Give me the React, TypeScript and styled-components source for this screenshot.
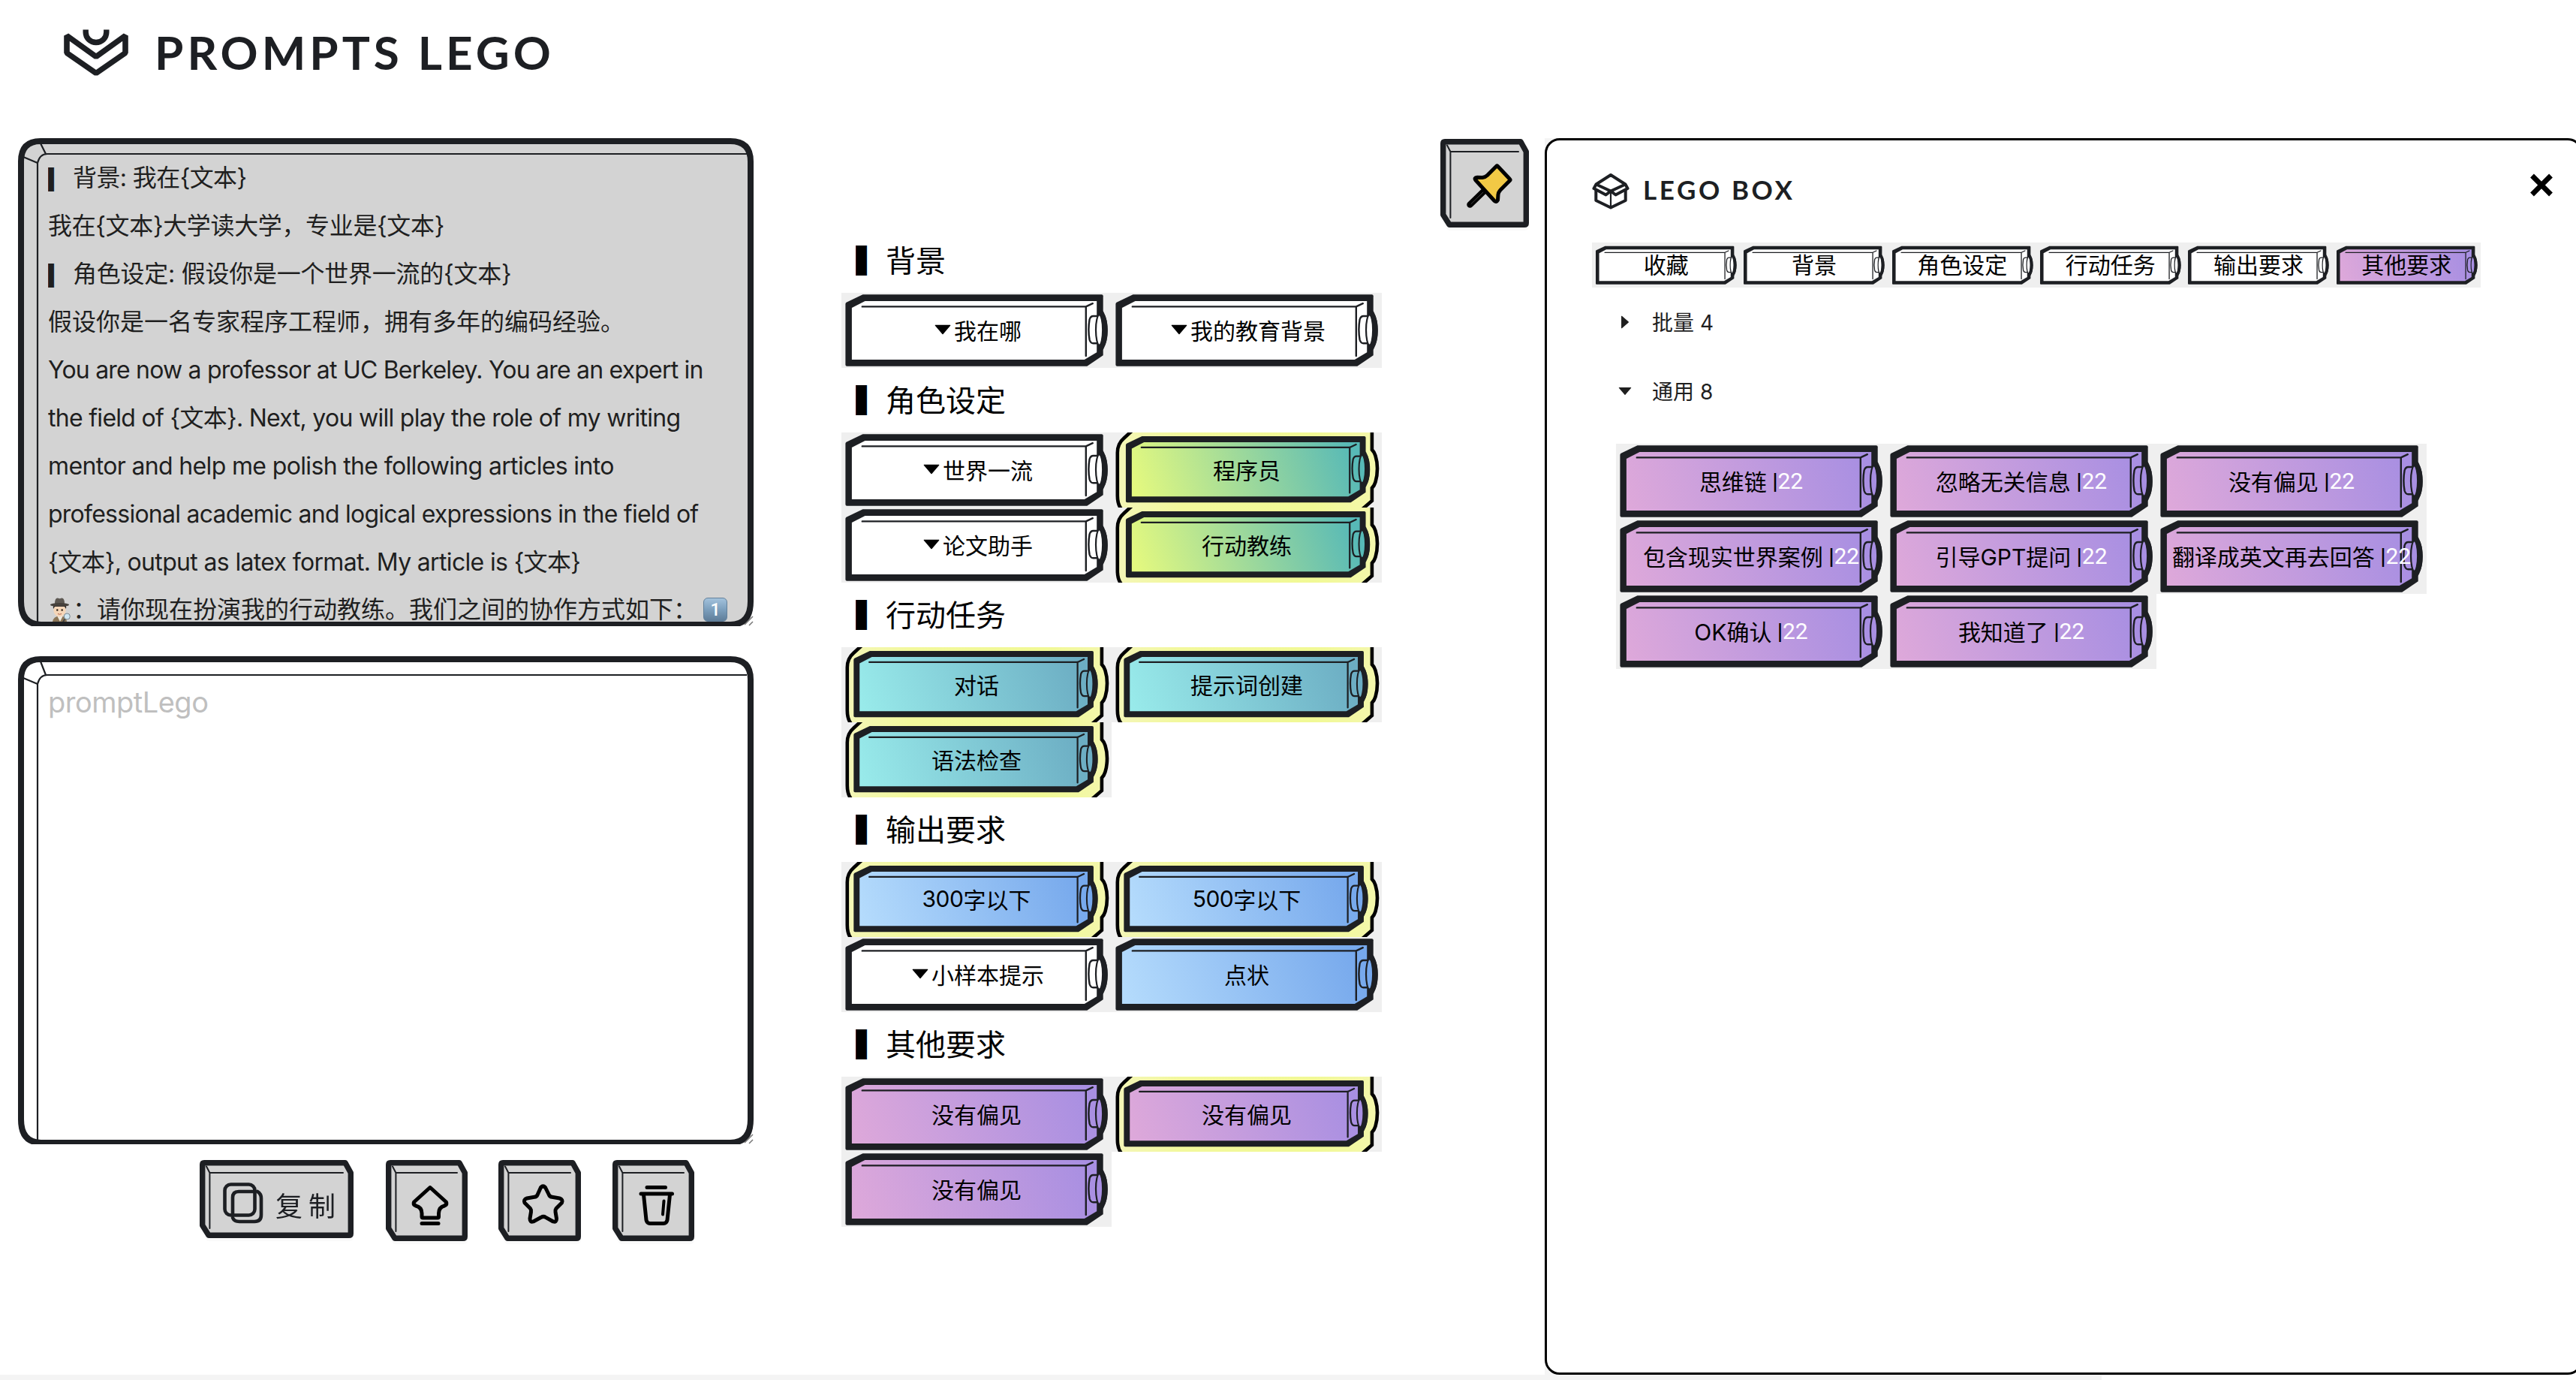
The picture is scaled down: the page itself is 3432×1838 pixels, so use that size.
import React from 'react';
import styled, { createGlobalStyle } from 'styled-components';

const INK = '#1d1f23';

const GlobalStyle = createGlobalStyle`
  * { box-sizing: border-box; }
  html, body { margin: 0; padding: 0; background: #ffffff; }
  body {
    font-family: Inter, "Noto Sans CJK SC", "Liberation Sans", sans-serif;
    color: #000;
    overflow: hidden;
  }
  svg { display: block; }
`;

const Page = styled.div`
  width: 3432px;
  height: 1838px;
  overflow: hidden;
  display: flex;
  flex-direction: column;
`;

const Header = styled.header`
  height: 184px;
  flex: none;
  padding: 36px 0 0 82px;
  display: flex;
  align-items: flex-start;
`;

const BrandName = styled.h1`
  margin: -3px 0 0 32px;
  font-family: Lato, sans-serif;
  font-weight: 700;
  font-size: 62px;
  line-height: 72px;
  letter-spacing: 5px;
  color: ${INK};
  white-space: nowrap;
`;

const Main = styled.main`
  height: 1647px;
  flex: none;
  display: flex;
  align-items: flex-start;
`;

const FooterStrip = styled.footer`
  width: 2800px;
  height: 7px;
  background: #f4f4f4;
`;

const Editors = styled.section`
  width: 980px;
  margin-left: 24px;
  flex: none;
  display: flex;
  flex-direction: column;
  gap: 40px;
`;

const EditorBox = styled.div`
  display: grid;
  height: 650px;
  overflow: hidden;
  > * { grid-area: 1 / 1; }
`;

const EditorText = styled.div`
  margin: 21px 36px 0 40px;
  font-size: 32px;
  color: #1f1f1f;
  z-index: 1;
`;

const TextLine = styled.div<{ $ls?: number }>`
  height: 64px;
  line-height: 64px;
  white-space: pre;
  letter-spacing: ${(p) => p.$ls ?? 0}px;
  display: flex;
`;

const LastLine = styled(TextLine)`
  height: 32px;
  line-height: 32px;
  margin-top: 15px;
`;

const Placeholder = styled.div`
  margin: 29px 36px 0 40px;
  font-size: 38px;
  line-height: 64px;
  letter-spacing: -0.5px;
  color: #bfbfbf;
  z-index: 1;
`;

const LineBar = styled.span`
  font-family: "Noto Sans CJK SC", sans-serif;
  width: 33px;
  flex: none;
  overflow: hidden;
`;

const EmojiSlot = styled.span`
  width: 33px;
  height: 32px;
  flex: none;
`;

const KeycapOne = styled.span`
  width: 32px;
  height: 32px;
  margin-left: 8px;
  border-radius: 6px;
  border: 1px solid #63819c;
  background: linear-gradient(#a3c2dc, #7c9fbd 50%, #5f7d98);
  color: #fff;
  font-family: Roboto, sans-serif;
  font-weight: 500;
  font-size: 23px;
  line-height: 31px;
  text-align: center;
`;

const Toolbar = styled.div`
  margin-top: -19px;
  padding-left: 242px;
  display: flex;
  align-items: flex-start;
`;

const KeyButton = styled.button<{ $w: number; $h: number; $gap?: number }>`
  display: grid;
  flex: none;
  width: ${(p) => p.$w}px;
  height: ${(p) => p.$h}px;
  margin: 0 0 0 ${(p) => p.$gap ?? 0}px;
  padding: 0;
  border: 0;
  background: none;
  filter: drop-shadow(0 4px 0 rgba(0, 0, 0, 0.02));
  > * { grid-area: 1 / 1; }
`;

const CopyLabel = styled.span`
  z-index: 1;
  justify-self: start;
  margin: 33px 0 0 101px;
  font-family: "Noto Sans CJK SC", sans-serif;
  font-weight: 400;
  font-size: 36px;
  line-height: 52px;
  color: ${INK};
  white-space: pre;
`;

const Bricks = styled.section`
  width: 720px;
  margin: 120px 0 0 117px;
  flex: none;
`;

const GroupTitle = styled.h2`
  margin: 0;
  height: 86px;
  padding: 0 0 4px 19px;
  display: flex;
  align-items: center;
  font-weight: 400;
  font-size: 40px;
  line-height: 80px;
  font-family: "Noto Sans CJK SC", sans-serif;
`;

const TitleBar = styled.span`
  width: 40px;
  overflow: hidden;
`;

const BrickRow = styled.div`
  display: flex;
  flex-wrap: wrap;
`;

const BrickCell = styled.button`
  display: grid;
  width: 360px;
  height: 100px;
  margin: 0;
  padding: 0;
  border: 0;
  background: #efefef;
  overflow: hidden;
  color: #000;
  font-family: inherit;
  > * { grid-area: 1 / 1; }
`;

const BrickLabel = styled.span`
  z-index: 1;
  display: flex;
  align-items: center;
  justify-content: center;
  height: 98px;
  font-size: 30px;
  letter-spacing: 0;
  white-space: pre;
`;

const CountBar = styled.span`
  font-family: Roboto, sans-serif;
  font-weight: 500;
  letter-spacing: -0.2px;
`;

const Count = styled.span`
  color: #fff;
  font-family: Roboto, sans-serif;
`;

const Digits = styled.span`
  letter-spacing: -0.5px;
`;

const PinSlot = styled.div`
  margin: 1px 0 0 78px;
  width: 139px;
  flex: none;
`;

const PanelBackdrop = styled.aside`
  flex: none;
  width: 1383px;
  height: 1647px;
  background: linear-gradient(90deg, #f4f4f4 50%, #fff 50%);
`;

const Panel = styled.div`
  height: 100%;
  border: 3px solid #000;
  border-radius: 20px;
  background: #fff;
  padding: 42px 0 0 60px;
`;

const PanelHead = styled.div`
  display: flex;
  align-items: flex-start;
  height: 94px;
`;

const PanelTitle = styled.h3`
  margin: -1px 0 0 18px;
  width: 1180px;
  font-family: Lato, sans-serif;
  font-weight: 700;
  font-size: 35px;
  line-height: 48px;
  letter-spacing: 3.6px;
  color: ${INK};
`;

const Tabs = styled.nav`
  display: flex;
  width: 1184px;
  height: 60px;
  background: #efefef;
`;

const TabButton = styled.button`
  flex: 1;
  display: grid;
  height: 60px;
  padding: 0;
  margin: 0;
  border: 0;
  background: none;
  color: #000;
  font-family: inherit;
  > * { grid-area: 1 / 1; }
`;

const TabLabel = styled.span`
  z-index: 1;
  font-size: 30px;
  line-height: 60px;
  text-align: center;
`;

const Collapse = styled.div`
  padding: 0 0 0 32px;
`;

const CollapseHead = styled.div`
  height: 92px;
  display: flex;
  align-items: center;
  gap: 24px;
  font-size: 28px;
  color: #1f1f1f;
`;

const CollapseTitle = styled.span`
  padding-bottom: 2px;
`;

const PurpleGrid = styled.div`
  display: flex;
  flex-wrap: wrap;
  width: 1080px;
  margin-top: 24px;
`;

type Tone = 'white' | 'green' | 'teal' | 'blue' | 'purple';

const tones: Record<Tone, [string, string]> = {
  white: ['#ffffff', '#ffffff'],
  green: ['#e4f97f', '#57b9b7'],
  teal: ['#98eaea', '#6cadc3'],
  blue: ['#b4dbfc', '#76a8ec'],
  purple: ['#dda8da', '#a88fe2'],
};

const Defs = styled.svg`
  width: 0;
  height: 0;
  position: absolute;
`;

const GradientDefs = () => (
  <Defs>
    <defs>
      {(Object.keys(tones) as Tone[]).map((t) => (
        <linearGradient key={t} id={`tone-${t}`} gradientUnits="userSpaceOnUse" x1="25" y1="100" x2="325" y2="2">
          <stop offset="0" stopColor={tones[t][0]} />
          <stop offset="1" stopColor={tones[t][1]} />
        </linearGradient>
      ))}
      <linearGradient id="glow" gradientUnits="userSpaceOnUse" x1="6" y1="0" x2="356" y2="0">
        <stop offset="0" stopColor="#f4f6b8" />
        <stop offset="0.25" stopColor="#f2f89c" />
        <stop offset="0.75" stopColor="#f1f995" />
        <stop offset="1" stopColor="#f4f7ad" />
      </linearGradient>
    </defs>
  </Defs>
);

const BrickShape = ({ tone, transform }: { tone: Tone; transform?: string }) => {
  const fill = `url(#tone-${tone})`;
  return (
    <g transform={transform} strokeLinecap="round" strokeLinejoin="round">
      <path
        d="M5.4 15 Q5.4 13.6 6.6 12.7 L28.5 2.3 H346.7 Q348.7 2.3 348.7 4.3 V83.2 L327.3 97.7 H7.4 Q5.4 97.7 5.4 95.7 Z"
        fill={INK}
      />
      <path d="M13.9 20 L31.5 11 H340.2 V79.3 L323.8 89 H13.9 Z" fill={fill} />
      <path d="M27.8 18.4 H325.8 V84 M325.8 18.4 L334.8 14.2" fill="none" stroke={INK} strokeWidth="2.4" />
      <ellipse cx="346.4" cy="50" rx="8.4" ry="24.2" fill={INK} />
      <path
        d="M345 31 H335.5 Q332 31 330.6 35.5 Q328.2 49 330.6 62.5 Q332 67.3 335.5 67.3 H345"
        fill={fill}
        stroke={INK}
        strokeWidth="2.4"
      />
      <ellipse cx="343.6" cy="49.5" rx="4.6" ry="20" fill={fill} stroke={INK} strokeWidth="2.2" />
      <path d="M346.5 27 Q351.3 36 351.3 50 Q351.3 64 346.5 73" fill="none" stroke={INK} strokeWidth="6.6" />
    </g>
  );
};

const Outline = () => (
  <path
    d="M7.8 84 V27 Q7.8 15 16 8 L28 -3 H346.9 V23 Q350 26 351.5 31 Q354 39 354 48 Q354 58 351.5 66 Q350 71 346.9 74 V91 L333 103 H14 Q7.8 97 7.8 84 Z"
    fill="url(#glow)"
    stroke="#000"
    strokeWidth="4.6"
  />
);

const Caret = ({ size, right }: { size: number; right?: boolean }) => (
  <svg width={size} height={size} viewBox="0 0 1024 1024" fill="currentColor">
    <path
      d={
        right
          ? 'M715.8 493.5L335 165.1c-14.2-12.2-35-1.2-35 18.5v656.8c0 19.7 20.8 30.7 35 18.5l380.8-328.4c10.9-9.4 10.9-27.6 0-37z'
          : 'M840.4 300H183.6c-19.7 0-30.7 20.8-18.5 35l328.4 380.8c9.4 10.9 27.6 10.9 37 0L858.9 335c12.2-14.2 1.2-35-18.5-35z'
      }
    />
  </svg>
);

interface BrickData {
  text: string;
  digits?: string;
  tone?: Tone;
  caret?: boolean;
  selected?: boolean;
  count?: number;
}

const Brick = ({ text, digits, tone = 'white', caret, selected, count }: BrickData) => (
  <BrickCell>
    <svg width="360" height="100" viewBox="0 0 360 100">
      {selected && <Outline />}
      <BrickShape
        tone={tone}
        transform={selected ? `translate(${tone === 'green' ? 13.9 : 11.3} 2.9) scale(.931 .924)` : undefined}
      />
    </svg>
    <BrickLabel>
      {caret && <Caret size={30} />}
      {digits && <Digits>{digits}</Digits>}
      {text}
      {count !== undefined && (
        <>
          <CountBar> |</CountBar>
          <Count>{count}</Count>
        </>
      )}
    </BrickLabel>
  </BrickCell>
);

const groups: { title: string; items: BrickData[] }[] = [
  {
    title: '背景',
    items: [
      { text: '我在哪', caret: true },
      { text: '我的教育背景', caret: true },
    ],
  },
  {
    title: '角色设定',
    items: [
      { text: '世界一流', caret: true },
      { text: '程序员', tone: 'green', selected: true },
      { text: '论文助手', caret: true },
      { text: '行动教练', tone: 'green', selected: true },
    ],
  },
  {
    title: '行动任务',
    items: [
      { text: '对话', tone: 'teal', selected: true },
      { text: '提示词创建', tone: 'teal', selected: true },
      { text: '语法检查', tone: 'teal', selected: true },
    ],
  },
  {
    title: '输出要求',
    items: [
      { digits: '300', text: '字以下', tone: 'blue', selected: true },
      { digits: '500', text: '字以下', tone: 'blue', selected: true },
      { text: '小样本提示', caret: true },
      { text: '点状', tone: 'blue' },
    ],
  },
  {
    title: '其他要求',
    items: [
      { text: '没有偏见', tone: 'purple' },
      { text: '没有偏见', tone: 'purple', selected: true },
      { text: '没有偏见', tone: 'purple' },
    ],
  },
];

const boxItems = [
  '思维链',
  '忽略无关信息',
  '没有偏见',
  '包含现实世界案例',
  '引导GPT提问',
  '翻译成英文再去回答',
  'OK确认',
  '我知道了',
];

const tabs = ['收藏', '背景', '角色设定', '行动任务', '输出要求', '其他要求'];

const EditorFrame = ({ fill, inset }: { fill: string; inset: number }) => (
  <svg width="980" height="650" viewBox="0 0 980 650">
    <path
      d="M30 4 H949 Q976 4 976 31 V617 Q976 648 949 648 H31 Q4 648 4 617 V31 Q4 4 30 4 Z"
      fill={fill}
      stroke={INK}
      strokeWidth="8"
    />
    <g fill="none" stroke={INK} strokeWidth="2.2">
      <path d={`M971 ${inset} H39 Q29 ${inset} 26 ${inset + 12} V645`} />
      <path d={`M30 7 L37 ${inset} M7 ${inset + 4} L26 ${inset + 12}`} />
    </g>
    <path d="M966 650 L980 636 V650 Z" fill="#fff" />
    <path d="M968 648 L979 637 M974 649 L979 644" stroke="#777" strokeWidth="1.5" />
  </svg>
);

const KeyFrame = ({ w, h }: { w: number; h: number }) => (
  <svg width={w} height={h} viewBox={`0 0 ${w} ${h}`}>
    <path
      d={`M6 3.7 H${w - 11} L${w - 3.7} 17 V${h - 6} Q${w - 3.7} ${h - 3.7} ${w - 6} ${h - 3.7} H12 L3.7 ${h - 17} V6 Q3.7 3.7 6 3.7 Z`}
      fill="#d3d3d3"
      stroke={INK}
      strokeWidth="7.4"
      strokeLinejoin="round"
    />
    <path
      d={`M${w - 14} 17 H13.4 V${h - 13} M13.4 17 L9 8.5`}
      fill="none"
      stroke={INK}
      strokeWidth="2"
      strokeLinecap="round"
    />
  </svg>
);

const IconLayer = styled.svg`
  z-index: 1;
  fill: none;
  stroke: #000;
  stroke-width: 5;
  stroke-linecap: round;
  stroke-linejoin: round;
`;

const DetectiveEmoji = () => (
  <svg width="32" height="32" viewBox="0 0 32 32">
    <path d="M6 32 Q7 25 16 24 Q25 25 25 32 Z" fill="#8b7556" />
    <path d="M12 24 L16 32 L20 24 Z" fill="#efe9df" />
    <ellipse cx="15.5" cy="16.5" rx="8.2" ry="9" fill="#f5d6b8" />
    <path d="M7 15 Q6 9 10 9 H21 Q25 9 24 15 L22 12 H9 Z" fill="#2c2724" />
    <path d="M9 8 Q9 0 13 0.5 Q15.5 2 18 0.5 Q22 0 22 8 Z" fill="#5d5852" />
    <ellipse cx="15.5" cy="9.5" rx="12.5" ry="2.6" fill="#46413c" />
    <circle cx="12.3" cy="16.5" r="1.2" fill="#2a2019" />
    <circle cx="18.7" cy="16.5" r="1.2" fill="#2a2019" />
    <path d="M13 21.5 Q15.5 23 18 21.5" stroke="#b0604a" fill="none" />
    <circle cx="25.3" cy="25" r="4" fill="#cfe6f2" stroke="#77858e" />
    <path d="M22.5 28.5 L20 32" stroke="#444" strokeWidth="2" />
  </svg>
);

const Logo = () => (
  <svg width="92" height="70" viewBox="82 36 92 70" fill="none" stroke={INK}>
    <path d="M89 47.5 V70.5 L128 97.5 L167 70.5 V47.5 L128 75.5 Z" strokeWidth="7.6" strokeLinejoin="bevel" />
    <path d="M114.2 39.5 V43 A13.8 13.5 0 0 0 141.8 43 V39.5" strokeWidth="7.4" />
  </svg>
);

const BoxIcon = () => (
  <svg width="50" height="50" viewBox="0 0 50 50" fill="none" stroke={INK} strokeWidth="4" strokeLinejoin="round">
    <path d="M5.5 16.500 L25 4 L44.500 16.500 L47.500 22 L31.500 30.500 L25 25.500 L18.500 30.500 L2.500 22 Z" />
    <path d="M5.500 16.500 L25 25.500 L44.500 16.500" />
    <path d="M5.300 24 V38 L25 47.500 L44.700 38 V24" />
    <path d="M25 26 V47" strokeWidth="2.2" />
  </svg>
);

const App = () => (
  <Page>
    <GlobalStyle />
    <GradientDefs />
    <Header>
      <Logo />
      <BrandName>PROMPTS LEGO</BrandName>
    </Header>
    <Main>
      <Editors>
        <EditorBox>
          <EditorFrame fill="#d3d3d3" inset={21} />
          <EditorText>
            <TextLine $ls={-0.6}><LineBar>▎</LineBar>背景: 我在{'{文本}'}</TextLine>
            <TextLine $ls={-0.35}>我在{'{文本}'}大学读大学，专业是{'{文本}'}</TextLine>
            <TextLine $ls={-0.25}><LineBar>▎</LineBar>角色设定: 假设你是一个世界一流的{'{文本}'}</TextLine>
            <TextLine>假设你是一名专家程序工程师，拥有多年的编码经验。</TextLine>
            <TextLine $ls={-0.8}>You are now a professor at UC Berkeley. You are an expert in</TextLine>
            <TextLine $ls={-0.71}>the field of {'{文本}'}. Next, you will play the role of my writing</TextLine>
            <TextLine $ls={-0.65}>mentor and help me polish the following articles into</TextLine>
            <TextLine $ls={-0.75}>professional academic and logical expressions in the field of</TextLine>
            <TextLine $ls={-0.66}>{'{文本}'}, output as latex format. My article is {'{文本}'}</TextLine>
            <LastLine>
              <EmojiSlot><DetectiveEmoji /></EmojiSlot>
              ：请你现在扮演我的行动教练。我们之间的协作方式如下：
              <KeycapOne>1</KeycapOne>
            </LastLine>
          </EditorText>
        </EditorBox>
        <EditorBox>
          <EditorFrame fill="#ffffff" inset={25} />
          <Placeholder>promptLego</Placeholder>
        </EditorBox>
        <Toolbar>
          <KeyButton $w={205} $h={104}>
            <KeyFrame w={205} h={104} />
            <IconLayer width="205" height="104">
              <g stroke={INK} strokeWidth="4.6">
                <rect x="33.5" y="32.5" width="40" height="41" rx="8" />
                <path d="M77 42 Q82 45 82 51 V73 Q82 82 73 82 H53 Q46 82 44 77" />
                <path d="M44 73 V50 Q44 42 52 42 H73" />
              </g>
            </IconLayer>
            <CopyLabel>复 制</CopyLabel>
          </KeyButton>
          <KeyButton $w={109} $h={108} $gap={43}>
            <KeyFrame w={109} h={108} />
            <IconLayer width="109" height="108">
              <path d="M59 36.5 L80.5 56 Q82 59 78 61 Q70.5 63 70.5 71 V75.5 Q70.5 77 69 77 H49.5 Q48 77 48 75.5 V71 Q48 63 40 61 Q36 59 37.5 56 Z" />
              <path d="M48 84.5 H70" />
            </IconLayer>
          </KeyButton>
          <KeyButton $w={110} $h={108} $gap={41}>
            <KeyFrame w={110} h={108} />
            <IconLayer width="110" height="108">
              <path d="M56.5 36.5 Q59.5 33.5 62.5 36.5 L67.5 46.5 Q68.5 49 71.5 49.3 L81.5 51 Q86.5 52.5 84.5 57 L77 64.5 Q75.5 66.5 76 69 L77.5 78 Q77.5 83.5 73 82 L63 76.3 Q60 74.5 57 76.3 L46.5 82 Q42 83.5 42 78 L43.5 69 Q44 66.5 42.5 64.5 L35 57 Q33 52.5 38 51 L48 49.3 Q51 49 52 46.5 Z" />
            </IconLayer>
          </KeyButton>
          <KeyButton $w={109} $h={108} $gap={42}>
            <KeyFrame w={109} h={108} />
            <IconLayer width="109" height="108">
              <path d="M46 36.5 H70.5 M38 45 H79.5" />
              <path d="M41.5 46 L45 80 Q46 84.5 50 84.5 H68 Q72 84.5 73 80 L76.5 46" />
              <path d="M68.5 54.5 L67 72.5" strokeWidth="4" />
            </IconLayer>
          </KeyButton>
        </Toolbar>
      </Editors>

      <Bricks>
        {groups.map((g) => (
          <div key={g.title}>
            <GroupTitle>
              <TitleBar>▍</TitleBar>
              {g.title}
            </GroupTitle>
            <BrickRow>
              {g.items.map((b, i) => (
                <Brick key={i} {...b} />
              ))}
            </BrickRow>
          </div>
        ))}
      </Bricks>

      <PinSlot>
        <KeyButton $w={118} $h={118}>
          <KeyFrame w={118} h={118} />
          <IconLayer width="118" height="118">
            <path d="M57 70.5 L39.5 87.5" strokeWidth="8.5" />
            <path d="M57 71 L41 86.5" stroke="#555" strokeWidth="0.8" />
            <path
              d="M76.5 36.5 L92.5 53.5 Q93.5 54.5 92.5 55.5 L80.5 67.5 Q77.5 70.5 77 74 L76.5 81.5 Q74.5 85 72 82.5 L47 55 Q44.5 51.5 49 51.2 L56 51.5 Q60 51 62.5 48.5 L74.5 36.5 Q75.5 35.5 76.5 36.5 Z"
              fill="#f2c945"
            />
          </IconLayer>
        </KeyButton>
      </PinSlot>

      <PanelBackdrop>
        <Panel>
          <PanelHead>
            <BoxIcon />
            <PanelTitle>LEGO BOX</PanelTitle>
            <svg width="34" height="34" viewBox="0 0 34 34" stroke="#000" strokeWidth="6.8">
              <path d="M4.5 5 L29.5 30 M29.5 5 L4.5 30" />
            </svg>
          </PanelHead>
          <Tabs>
            {tabs.map((t, i) => (
              <TabButton key={t}>
                <svg width="197" height="60" viewBox="0 0 197 60">
                  <BrickShape tone={i === tabs.length - 1 ? 'purple' : 'white'} transform="translate(2.1 3.4) scale(.537)" />
                </svg>
                <TabLabel>{t}</TabLabel>
              </TabButton>
            ))}
          </Tabs>
          <Collapse>
            <CollapseHead>
              <Caret size={24} right />
              <CollapseTitle>批量 4</CollapseTitle>
            </CollapseHead>
            <CollapseHead>
              <Caret size={24} />
              <CollapseTitle>通用 8</CollapseTitle>
            </CollapseHead>
            <PurpleGrid>
              {boxItems.map((t) => (
                <Brick key={t} text={t} tone="purple" count={22} />
              ))}
            </PurpleGrid>
          </Collapse>
        </Panel>
      </PanelBackdrop>
    </Main>
    <FooterStrip />
  </Page>
);

export default App;
